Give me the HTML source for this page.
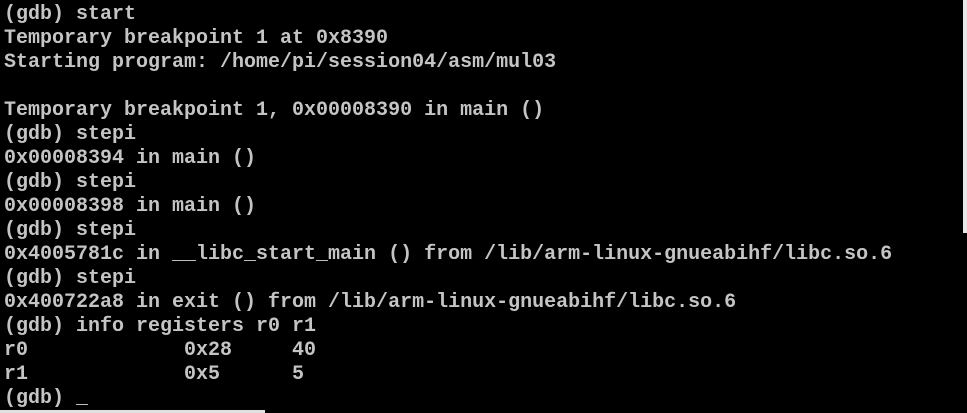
<!DOCTYPE html>
<html><head><meta charset="utf-8"><style>
html,body{margin:0;padding:0;background:#000;width:967px;height:413px;overflow:hidden;position:relative}
pre{position:absolute;left:4px;top:3px;margin:0;font-family:"Liberation Mono",monospace;font-size:20px;line-height:24px;color:#c4c4c4;font-weight:bold;letter-spacing:0}
.r{position:absolute;right:0;top:0;width:4px;height:233px;background:#e8e8e8}
.b{position:absolute;left:0;top:410px;width:265px;height:3px;background:#e0e0e0}
</style></head><body>
<pre>(gdb) start
Temporary breakpoint 1 at 0x8390
Starting program: /home/pi/session04/asm/mul03

Temporary breakpoint 1, 0x00008390 in main ()
(gdb) stepi
0x00008394 in main ()
(gdb) stepi
0x00008398 in main ()
(gdb) stepi
0x4005781c in __libc_start_main () from /lib/arm-linux-gnueabihf/libc.so.6
(gdb) stepi
0x400722a8 in exit () from /lib/arm-linux-gnueabihf/libc.so.6
(gdb) info registers r0 r1
r0             0x28     40
r1             0x5      5
(gdb) _</pre>
<div class="r"></div><div class="b"></div>
</body></html>
